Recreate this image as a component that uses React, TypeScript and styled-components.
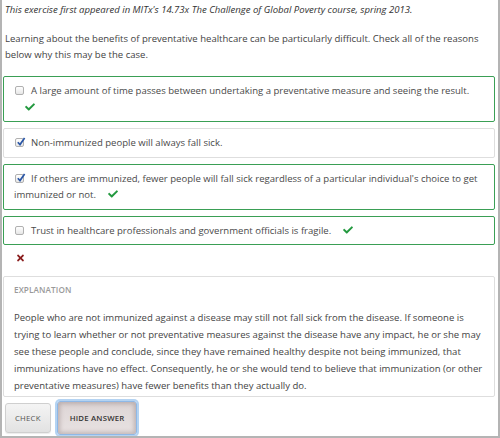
import React from "react";
import styled, { createGlobalStyle } from "styled-components";
import { FaCheck, FaTimes } from "react-icons/fa";

const Global = createGlobalStyle`
  html, body { margin: 0; padding: 0; background: #fff; }
  body { font-family: "Open Sans", "Liberation Sans", sans-serif; }
  * { box-sizing: border-box; }
`;

const Frame = styled.div`
  width: 500px;
  height: 438px;
  border: 2px solid #b4b4b4;
  border-top: none;
  padding: 0 3px 0 1px;
  color: #444;
  font-size: 9.55px;
  line-height: 16.5px;
  overflow: hidden;
`;

const Note = styled.p`
  margin: 2px 0 0 2px;
  font-style: italic;
  color: #333;
`;

const Intro = styled.p`
  margin: 12px 0 0 2px;
  color: #444;
`;

const Options = styled.div`
  margin-top: 12px;
  display: flex;
  flex-direction: column;
  gap: 6px;
`;

const Option = styled.label<{ $correct?: boolean }>`
  display: block;
  border: 1px solid ${(p) => (p.$correct ? "#3a9f55" : "#dedede")};
  border-radius: 2px;
  padding: 6px 10px 5px 10px;
  color: #4a4a4a;
`;

const Box = styled.span<{ $checked?: boolean }>`
  display: inline-block;
  width: 9px;
  height: 9px;
  margin: 0 7px 0 1px;
  vertical-align: -1px;
  border: 1px solid #b0b0b0;
  border-radius: 2px;
  background: linear-gradient(#ffffff, #e6e6e6);
  position: relative;
  svg { position: absolute; left: 0px; top: -2px; }
`;

const Tick = styled(FaCheck)<{ $block?: boolean }>`
  color: #23993f;
  width: 10px;
  height: 10px;
  vertical-align: -1px;
  margin-left: ${(p) => (p.$block ? "1px" : "12px")};
`;

const TickLine = styled.div`
  padding-left: 10px;
  line-height: 17px;
`;

const Cross = styled(FaTimes)`
  display: block;
  color: #8a1d1d;
  width: 9px;
  height: 10px;
  margin: 8px 0 0 13px;
`;

const Explanation = styled.div`
  margin-top: 13px;
  border: 1px solid #dedede;
  border-radius: 2px;
  padding: 5px 10px 2px 10px;
`;

const ExTitle = styled.div`
  font-size: 8.2px;
  font-weight: 600;
  color: #9a9a9a;
  letter-spacing: 0.1px;
`;

const ExText = styled.p`
  margin: 10px 0 0 0;
  color: #444;
  line-height: 17px;
`;

const Actions = styled.div`
  display: flex;
  align-items: center;
  gap: 6px;
  margin-top: 4px;
  padding-left: 2px;
`;

const Button = styled.button<{ $focused?: boolean }>`
  font-family: "Open Sans", "Liberation Sans", sans-serif;
  font-size: 7.8px;
  letter-spacing: 0.2px;
  height: ${(p) => (p.$focused ? "34px" : "30px")};
  padding: 0 ${(p) => (p.$focused ? "12px" : "9px")};
  border-radius: 3px;
  cursor: pointer;
  color: ${(p) => (p.$focused ? "#333" : "#555")};
  font-weight: ${(p) => (p.$focused ? 600 : 400)};
  border: 1px solid ${(p) => (p.$focused ? "#8fb8e6" : "#cfcfcf")};
  background: ${(p) =>
    p.$focused
      ? "linear-gradient(#ddd5d5, #e8e2e2)"
      : "linear-gradient(#f4f4f4, #e2e2e2)"};
  box-shadow: ${(p) =>
    p.$focused
      ? "0 0 0 2px #b4d3f2, inset 0 0 4px 2px rgba(120,100,100,0.35)"
      : "0 1px 1px rgba(0,0,0,0.08)"};
`;

const CheckMark = () => (
  <svg width="10" height="10" viewBox="0 0 10 10">
    <path d="M1.8 5.2 L4 7.6 L8.6 1" fill="none" stroke="#2a56a6" strokeWidth="1.7" />
  </svg>
);

const Check = ({ checked }: { checked?: boolean }) => (
  <Box $checked={checked}>{checked && <CheckMark />}</Box>
);

export default function App() {
  return (
    <>
      <Global />
      <Frame>
        <Note>This exercise first appeared in MITx's 14.73x The Challenge of Global Poverty course, spring 2013.</Note>
        <Intro>
          Learning about the benefits of preventative healthcare can be particularly difficult. Check all of the reasons
          below why this may be the case.
        </Intro>
        <Options>
          <Option $correct>
            <Check />A large amount of time passes between undertaking a preventative measure and seeing the result.
            <TickLine>
              <Tick $block />
            </TickLine>
          </Option>
          <Option>
            <Check checked />
            Non-immunized people will always fall sick.
          </Option>
          <Option $correct>
            <Check checked />
            If others are immunized, fewer people will fall sick regardless of a particular individual's choice to get
            immunized or not.
            <Tick />
          </Option>
          <Option $correct>
            <Check />
            Trust in healthcare professionals and government officials is fragile.
            <Tick />
          </Option>
        </Options>
        <Cross />
        <Explanation>
          <ExTitle>EXPLANATION</ExTitle>
          <ExText>
            People who are not immunized against a disease may still not fall sick from the disease. If someone is
            trying to learn whether or not preventative measures against the disease have any impact, he or she may
            see these people and conclude, since they have remained healthy despite not being immunized, that
            immunizations have no effect. Consequently, he or she would tend to believe that immunization (or other
            preventative measures) have fewer benefits than they actually do.
          </ExText>
        </Explanation>
        <Actions>
          <Button>CHECK</Button>
          <Button $focused>HIDE ANSWER</Button>
        </Actions>
      </Frame>
    </>
  );
}
